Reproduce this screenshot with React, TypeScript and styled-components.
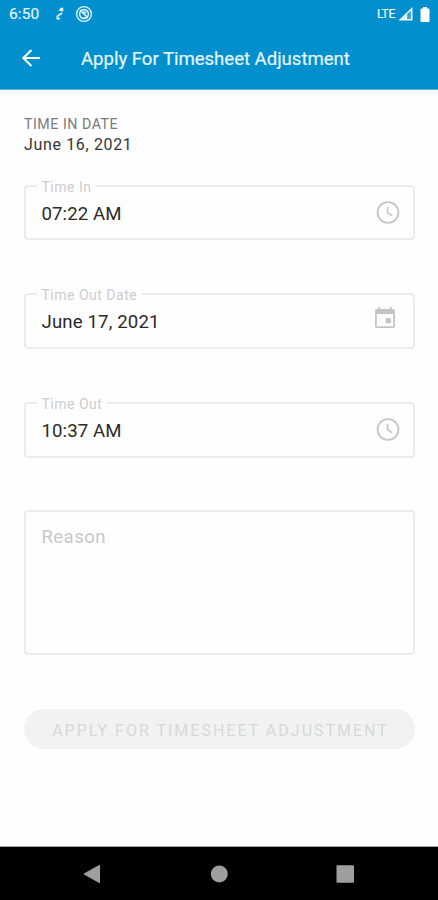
import React from "react";
import styled, { createGlobalStyle } from "styled-components";

const GlobalStyle = createGlobalStyle`
  * { box-sizing: border-box; }
  html, body { margin: 0; padding: 0; background: #fefefe; }
  body { font-family: Roboto, "Liberation Sans", sans-serif; }
`;

const Screen = styled.div`
  width: 438px;
  height: 900px;
  display: flex;
  flex-direction: column;
  overflow: hidden;
  background: #fefefe;
`;

const Header = styled.header`
  height: 90px;
  background: #028fce;
  border-bottom: 1px solid #63abd0;
  color: #f2faff;
`;

const StatusBar = styled.div`
  height: 28px;
  padding: 0 8px 0 9px;
  display: flex;
  align-items: center;
`;

const Clock = styled.span`
  width: 46px;
  font-size: 15.5px;
  line-height: 28px;
  letter-spacing: 0.1px;
  color: #e4f4fc;
  -webkit-text-stroke: 0.2px #e4f4fc;
`;

const StatusGroup = styled.div<{ $end?: boolean }>`
  display: flex;
  align-items: center;
  margin-left: ${(p) => (p.$end ? "auto" : "0")};
`;

const Network = styled.span`
  font-size: 12px;
  line-height: 28px;
  letter-spacing: -0.3px;
  margin-right: 3px;
  -webkit-text-stroke: 0.2px #f2faff;
`;

const Icon = styled.svg<{ $gap?: number }>`
  display: block;
  flex: none;
  margin-left: ${(p) => p.$gap ?? 0}px;
`;

const AppBar = styled.div`
  height: 61px;
  padding-left: 21px;
  display: flex;
  align-items: center;
`;

const BackButton = styled.button`
  width: 60px;
  margin-top: -2px;
  padding: 0;
  border: 0;
  background: none;
  color: inherit;
`;

const Title = styled.h1`
  margin: 1px 0 0;
  font-size: 18.6px;
  font-weight: 400;
  line-height: 24px;
  letter-spacing: -0.03px;
  white-space: nowrap;
  color: #e6f5fc;
  -webkit-text-stroke: 0.2px #e6f5fc;
`;

const Form = styled.main`
  flex: 1;
  padding: 24px 23px 0 24px;
  display: flex;
  flex-direction: column;
`;

const Caption = styled.div`
  font-size: 14.2px;
  line-height: 20px;
  letter-spacing: 0.52px;
  color: #7a7a7a;
`;

const DateText = styled.div`
  font-size: 16px;
  line-height: 22px;
  letter-spacing: 0.65px;
  color: #363636;
`;

const Field = styled.div<{ $top: number; $height: number }>`
  position: relative;
  margin-top: ${(p) => p.$top}px;
  height: ${(p) => p.$height}px;
  border: 2px solid #eaebeb;
  border-radius: 4px;
  padding: 0 13px 0 15.5px;
  display: flex;
  align-items: center;
  justify-content: space-between;
`;

const FieldLabel = styled.label`
  position: absolute;
  top: -9px;
  left: 10.5px;
  padding: 0 5px;
  background: #fefefe;
  font-size: 14px;
  line-height: 18px;
  letter-spacing: 0.5px;
  white-space: nowrap;
  color: #cbcdce;
`;

const Value = styled.span<{ $spacing: number }>`
  padding-top: 2px;
  font-size: 18.6px;
  line-height: 24px;
  letter-spacing: ${(p) => p.$spacing}px;
  color: #2a2a2a;
`;

const Reason = styled.div`
  margin-top: 52px;
  height: 145px;
  border: 2px solid #eaebeb;
  border-radius: 4px;
  padding: 13px 15.5px;
  font-size: 18.6px;
  line-height: 24px;
  letter-spacing: 0.4px;
  color: #c6c8c9;
`;

const Submit = styled.button`
  margin-top: 54px;
  height: 40px;
  padding: 2px 0 0 2px;
  border: 0;
  border-radius: 20px;
  background: #f1f2f2;
  font-family: inherit;
  font-size: 16px;
  letter-spacing: 2px;
  white-space: nowrap;
  color: #d6d9d9;
`;

const NavBar = styled.nav`
  height: 54px;
  background: #000;
  border-top: 1px solid #a0a0a0;
  padding: 0 83px 0 83px;
  display: flex;
  align-items: center;
  justify-content: space-between;
`;

const ClockIcon = () => (
  <Icon width="24" height="24" viewBox="0 0 24 24" fill="none" stroke="#c3c7c9" strokeWidth="1.9">
    <circle cx="12" cy="11.5" r="10.4" />
    <path d="M11.6 5.8V11.7L16.4 14.7" strokeWidth="1.6" />
  </Icon>
);

const CalendarIcon = styled(Icon)`
  margin: -7px 5px 0 0;
`;

export default function App() {
  return (
    <Screen>
      <GlobalStyle />
      <Header>
        <StatusBar>
          <Clock>6:50</Clock>
          <StatusGroup>
            <Icon width="10" height="14" viewBox="0 0 10 14" fill="none" stroke="#def2fb" strokeWidth="1.7">
              <path d="M4 3.5L7.2 1.8M5 1.5H7.4V4.4M7.2 6L2.6 9M2.4 8.4V12.4M2.4 12L5 11.4" />
            </Icon>
            <Icon $gap={10} width="18" height="18" viewBox="0 0 18 18" fill="none" stroke="#def2fb">
              <circle cx="9" cy="9" r="7.4" strokeWidth="1.4" />
              <circle cx="9" cy="9" r="4.4" strokeWidth="1.6" />
              <path d="M5.2 5.2L13 13M8.4 7L11.4 7.6" strokeWidth="1.7" />
            </Icon>
          </StatusGroup>
          <StatusGroup $end>
            <Network>LTE</Network>
            <Icon width="15" height="14" viewBox="0 0 15 14">
              <path d="M0.4 13.5L14.5 0V13.5Z" fill="#e6f6fd" />
              <path d="M9.2 7L12.9 3.5V12H9.2Z" fill="#389fd3" />
            </Icon>
            <Icon $gap={7} width="10" height="15" viewBox="0 0 10 15">
              <path d="M3 0H7V1.5H8.5Q9.5 1.5 9.5 2.5V14Q9.5 15 8.5 15H1.5Q.5 15 .5 14V2.5Q.5 1.5 1.5 1.5H3Z" fill="#fff" />
            </Icon>
          </StatusGroup>
        </StatusBar>
        <AppBar>
          <BackButton aria-label="Back">
            <Icon width="20" height="18" viewBox="0 0 20 18" fill="none" stroke="#f4fbff" strokeWidth="2.1">
              <path d="M19 9H2.5M10.5 .9L2.3 9L10.5 17.1" />
            </Icon>
          </BackButton>
          <Title>Apply For Timesheet Adjustment</Title>
        </AppBar>
      </Header>
      <Form>
        <Caption>TIME IN DATE</Caption>
        <DateText>June 16, 2021</DateText>
        <Field $top={29} $height={55}>
          <FieldLabel>Time In</FieldLabel>
          <Value $spacing={0.1}>07:22 AM</Value>
          <ClockIcon />
        </Field>
        <Field $top={53} $height={56}>
          <FieldLabel>Time Out Date</FieldLabel>
          <Value $spacing={0.15}>June 17, 2021</Value>
          <CalendarIcon width="20" height="22" viewBox="0 0 20 22">
            <path d="M0 4Q0 2 2 2H3.2V0H5.2V2H14.8V0H16.8V2H18Q20 2 20 4V19Q20 21 18 21H2Q0 21 0 19ZM1.8 7V19.2H18.2V7Z" fill="#c3c6c8" fillRule="evenodd" />
            <rect x="10.8" y="11.2" width="5" height="5" fill="#c0c4c8" />
          </CalendarIcon>
        </Field>
        <Field $top={53} $height={56}>
          <FieldLabel>Time Out</FieldLabel>
          <Value $spacing={0.1}>10:37 AM</Value>
          <ClockIcon />
        </Field>
        <Reason>Reason</Reason>
        <Submit disabled>APPLY FOR TIMESHEET ADJUSTMENT</Submit>
      </Form>
      <NavBar>
        <Icon width="18" height="18" viewBox="0 0 18 18">
          <path d="M1 9L16.5 .3V17.7Z" fill="#9e9e9e" stroke="#9e9e9e" strokeLinejoin="round" />
        </Icon>
        <Icon width="18" height="18" viewBox="0 0 18 18">
          <circle cx="9.3" cy="9" r="8.5" fill="#9e9e9e" />
        </Icon>
        <Icon width="19" height="18" viewBox="0 0 19 18">
          <rect x=".5" y=".2" width="17.5" height="17.5" rx="1" fill="#9e9e9e" />
        </Icon>
      </NavBar>
    </Screen>
  );
}
